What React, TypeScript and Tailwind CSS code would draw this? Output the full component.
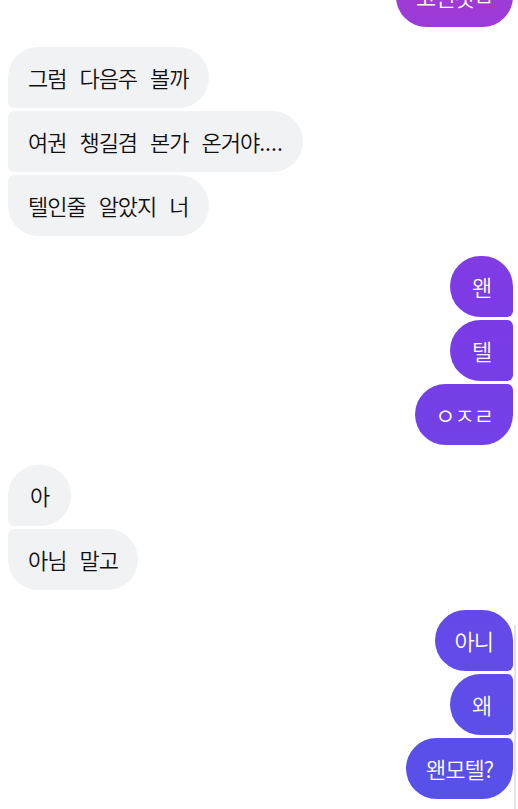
import React from 'react'

type Msg = { text: string; mine: boolean }

const groups: Msg[][] = [
  [{ text: '고런것ㅁ', mine: true }],
  [
    { text: '그럼 다음주 볼까', mine: false },
    { text: '여권 챙길겸 본가 온거야....', mine: false },
    { text: '텔인줄 알았지 너', mine: false },
  ],
  [
    { text: '왠', mine: true },
    { text: '텔', mine: true },
    { text: 'ㅇㅈㄹ', mine: true },
  ],
  [
    { text: '아', mine: false },
    { text: '아님 말고', mine: false },
  ],
  [
    { text: '아니', mine: true },
    { text: '왜', mine: true },
    { text: '왠모텔?', mine: true },
  ],
]

function cornerClass(mine: boolean, first: boolean, last: boolean) {
  if (mine) {
    if (first && last) return 'rounded-[31px]'
    if (first) return 'rounded-[31px] rounded-br-[6px]'
    if (last) return 'rounded-[31px] rounded-tr-[6px]'
    return 'rounded-[31px] rounded-tr-[6px] rounded-br-[6px]'
  }
  if (first && last) return 'rounded-[31px]'
  if (first) return 'rounded-[31px] rounded-bl-[6px]'
  if (last) return 'rounded-[31px] rounded-tl-[6px]'
  return 'rounded-[31px] rounded-tl-[6px] rounded-bl-[6px]'
}

// trailing dots sit a little looser in the original
function renderText(text: string) {
  const m = text.match(/^(.*?)(\.{2,})$/)
  if (!m) return text
  return (
    <>
      {m[1]}
      <span className="tracking-[0px]">{m[2]}</span>
    </>
  )
}

function Bubble({ msg, first, last }: { msg: Msg; first: boolean; last: boolean }) {
  const shape = cornerClass(msg.mine, first, last)
  if (msg.mine) {
    return (
      <div className="flex justify-end">
        <div
          className={`${shape} bg-fixed bg-linear-to-b from-[#9e3ad6] via-[#7a3be6] via-40% to-[#5551ea] px-[20px] py-[15px] text-[22px] leading-[31px] font-[350] tracking-[-1px] text-white min-w-[63px] text-center [word-spacing:9px]`}
        >
          {renderText(msg.text)}
        </div>
      </div>
    )
  }
  return (
    <div className="flex justify-start">
      <div
        className={`${shape} bg-[#f1f2f4] px-[20px] py-[15px] text-[22px] leading-[31px] font-[350] tracking-[-1px] text-[#111] min-w-[63px] text-center [word-spacing:9px]`}
      >
        {renderText(msg.text)}
      </div>
    </div>
  )
}

export default function App() {
  return (
    <div
      className="relative h-[809px] w-[518px] overflow-hidden bg-white"
      style={{ fontFamily: '"Noto Sans CJK KR", "Noto Sans", sans-serif' }}
    >
      <div className="-mt-[34px] flex flex-col gap-[20px] pl-[8px] pr-[5px]">
        {groups.map((g, gi) => (
          <div key={gi} className="flex flex-col gap-[3px]">
            {g.map((m, mi) => (
              <Bubble key={mi} msg={m} first={mi === 0} last={mi === g.length - 1} />
            ))}
          </div>
        ))}
      </div>
      <div className="absolute right-[2px] top-[625px] bottom-0 w-[2px] bg-[#e4e4e8]" />
    </div>
  )
}
